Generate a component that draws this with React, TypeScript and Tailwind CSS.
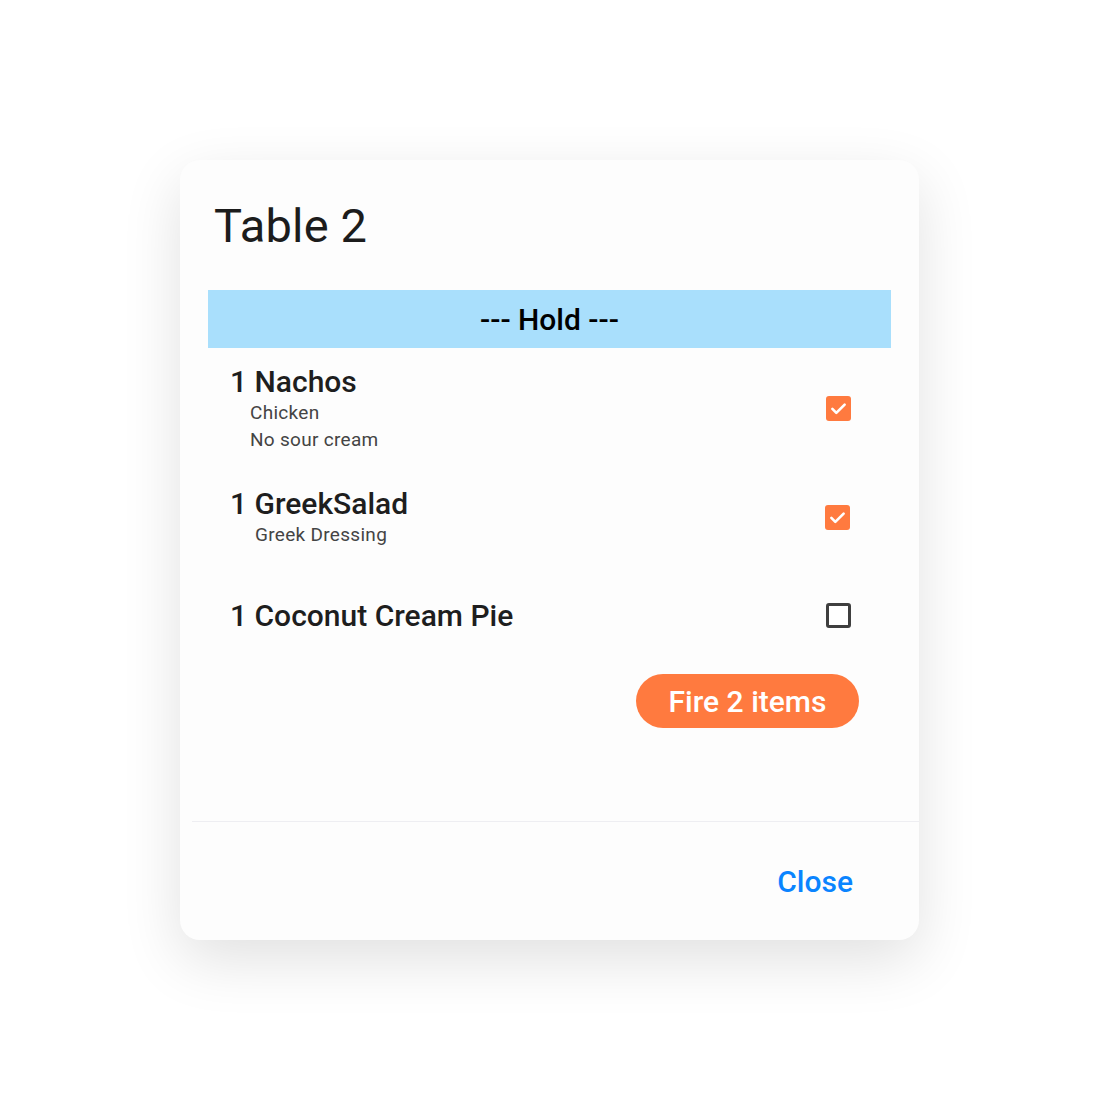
import React, { useState } from "react";

type Item = {
	qty: number;
	name: string;
	mods: string[];
	modIndent: string;
	checked: boolean;
};

const initialItems: Item[] = [
	{ qty: 1, name: "Nachos", mods: ["Chicken", "No sour cream"], modIndent: "pl-[20px]", checked: true },
	{ qty: 1, name: "GreekSalad", mods: ["Greek Dressing"], modIndent: "pl-[25px]", checked: true },
	{ qty: 1, name: "Coconut Cream Pie", mods: [], modIndent: "", checked: false },
];

const Check: React.FC<{ checked: boolean; onClick: () => void }> = ({ checked, onClick }) => (
	<button
		onClick={onClick}
		className={
			checked
				? "w-[25px] h-[25px] rounded-[3px] bg-[#ff7a3f] flex items-center justify-center"
				: "w-[25px] h-[25px] rounded-[3px] border-[3px] border-[#3f3f3f] bg-white"
		}
	>
		{checked && (
			<svg width="21" height="21" viewBox="0 0 24 24" fill="none">
				<path d="M5 12.5l4.5 4.5L19 7.5" stroke="white" strokeWidth="3" strokeLinecap="round" strokeLinejoin="round" />
			</svg>
		)}
	</button>
);

const App: React.FC = () => {
	const [items, setItems] = useState<Item[]>(initialItems);
	const count = items.filter((i) => i.checked).length;

	const toggle = (idx: number) =>
		setItems(items.map((it, i) => (i === idx ? { ...it, checked: !it.checked } : it)));

	return (
		<div className="w-[1100px] h-[1100px] bg-white flex items-start pl-[180px] pt-[160px] font-['Roboto',sans-serif]">
			<div className="w-[739px] h-[780px] bg-[#fdfdfd] rounded-[20px] shadow-[0_20px_60px_rgba(0,0,0,0.12)] flex flex-col">
				{/* Header */}
				<h1 className="text-[47px] leading-none text-[#1c1c1c] pl-[34px] pt-[42px] tracking-[0.2px]">Table 2</h1>

				{/* Hold bar */}
				<div className="mx-[28px] mt-[41px] h-[58px] bg-[#a9dffc] flex items-center justify-center">
					<span className="text-[30px] font-medium text-black">--- Hold ---</span>
				</div>

				{/* Items */}
				<div className="flex flex-col pl-[50px] pr-[68px]">
					{items.map((it, i) => (
						<div
							key={it.name}
							className={
								i === 0
									? "flex items-start justify-between pt-[17px] h-[122px]"
									: i === 1
										? "flex items-start justify-between pt-[17px] h-[112px]"
										: "flex items-start justify-between pt-[17px] h-[84px]"
							}
						>
							<div className="flex flex-col">
								<div className="text-[30px] leading-[34px] font-medium text-[#1e1e1e]">
									{it.qty} {it.name}
								</div>
								{it.mods.map((m) => (
									<div key={m} className={`${it.modIndent} text-[19px] leading-[27px] text-[#444444] tracking-[0.3px]`}>
										{m}
									</div>
								))}
							</div>
							<div
								className={
									i === 0 ? "pt-[31px]" : i === 1 ? "pt-[18px] -ml-[1px] pr-[1px]" : "pt-[4px]"
								}
							>
								<Check checked={it.checked} onClick={() => toggle(i)} />
							</div>
						</div>
					))}
				</div>

				<div className="flex justify-end pr-[60px] mt-[8px]">
					<button className="w-[223px] h-[54px] rounded-full bg-[#ff7a3f] text-white text-[30px] font-medium">
						Fire {count} items
					</button>
				</div>

				<div className="flex-1" />

				{/* Footer */}
				<div className="ml-[12px] border-t border-[#eeeef2]" />
				<div className="h-[118px] flex items-center justify-end pr-[66px]">
					<button className="text-[30px] font-medium text-[#0a84ff]">Close</button>
				</div>
			</div>
		</div>
	);
};

export default App;
